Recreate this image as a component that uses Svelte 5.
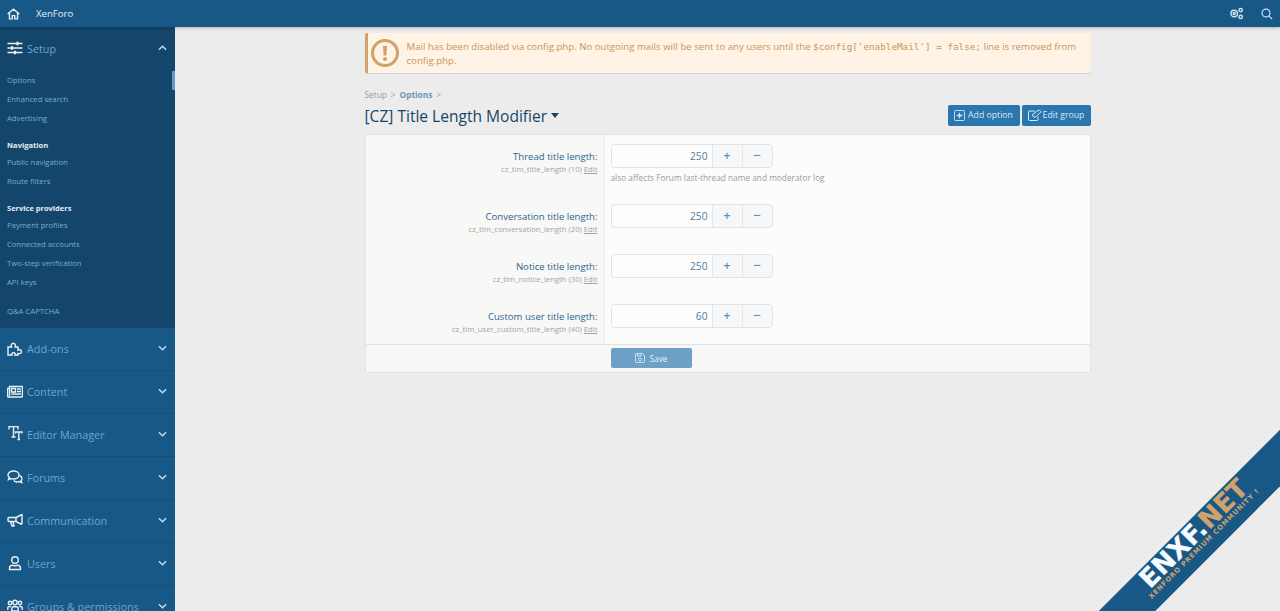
<script lang="ts">
    const setupGroups = [
        { items: ["Options", "Enhanced search", "Advertising"] },
        { title: "Navigation", items: ["Public navigation", "Route filters"] },
        { title: "Service providers", items: ["Payment profiles", "Connected accounts", "Two-step verification", "API keys"] },
        { items: ["Q&A CAPTCHA"] },
    ];

    const sections = [
        { label: "Add-ons", icon: "puzzle" },
        { label: "Content", icon: "news" },
        { label: "Editor Manager", icon: "text" },
        { label: "Forums", icon: "comments" },
        { label: "Communication", icon: "bullhorn" },
        { label: "Users", icon: "user" },
        { label: "Groups & permissions", icon: "users" },
    ];

    const options = [
        { label: "Thread title length:", id: "cz_tlm_title_length (10)", value: 250, hint: "also affects Forum last-thread name and moderator log" },
        { label: "Conversation title length:", id: "cz_tlm_conversation_length (20)", value: 250 },
        { label: "Notice title length:", id: "cz_tlm_notice_length (30)", value: 250 },
        { label: "Custom user title length:", id: "cz_tlm_user_custom_title_length (40)", value: 60 },
    ];
</script>

{#snippet navIcon(name)}
    <svg class="nav-icon" viewBox="0 0 16 16" fill="none" stroke="currentColor" stroke-width="1.400">
        {#if name === "puzzle"}
            <path d="M1 7h3.500c-.9-2 .2-3.800 1.800-3.800S9 5 8.200 7H11v3c1.600-.7 3.500 0 3.500 1.700S12.600 14 11 13.400V15H8c.5-1.500-.4-2.400-1.500-2.400S4.500 13.500 5 15H1z" />
        {:else if name === "news"}
            <path d="M2.500 3.500h13v9.500a1 1 0 0 1-1 1H1.500a1 1 0 0 1-1-1V5.500h2zM2.500 5.500V13" />
            <path d="M4.500 5.500h4v3.500h-4zM10 6h4M10 8.500h4M4.500 11h9.500" />
        {:else if name === "text"}
            <path d="M2 3.500V.5h9v3M6.500.5V11M4.500 11h4" />
            <path d="M8.500 7.500V6h6.500v1.500M11.800 6v7.500M10.500 13.500h2.600" />
        {:else if name === "comments"}
            <path d="M6.500 2C3.500 2 1 3.700 1 6c0 1 .5 1.900 1.300 2.600L1.500 10.500l2.500-.9c.8.300 1.600.4 2.500.4 3 0 5.500-1.700 5.500-4S9.500 2 6.500 2z" />
            <path d="M12.500 6.500c1.500.6 2.500 1.800 2.500 3 0 .9-.4 1.600-1 2.200l.7 1.800-2.500-.9c-2 .7-4.200.3-5.500-1" />
        {:else if name === "bullhorn"}
            <path d="M15 2v10M15 2.500 9 5.500H2a1 1 0 0 0-1 1v2a1 1 0 0 0 1 1h7l6 3" />
            <path d="M3.500 9.500 5 14h2L6 9.500M9 5.500v4" />
        {:else if name === "user"}
            <circle cx="8" cy="5" r="3.300" />
            <path d="M2.500 14.500v-1.200c0-1.700 1.400-3 3-3 .8 0 1.500.4 2.500.4s1.700-.4 2.500-.4c1.600 0 3 1.300 3 3v1.200z" />
        {:else}
            <circle cx="3" cy="5" r="1.700" />
            <circle cx="8" cy="4.500" r="2.200" />
            <circle cx="13" cy="5" r="1.700" />
            <path d="M.8 12V9.800c0-.8.700-1.300 1.400-1.300h1.600M15.200 12V9.800c0-.8-.7-1.300-1.400-1.300h-1.600M4.800 13v-2.500c0-1.100.8-1.800 1.800-1.800h2.800c1 0 1.800.7 1.800 1.800V13z" />
        {/if}
    </svg>
{/snippet}

{#snippet chevron(up)}
    <svg class="chevron" viewBox="0 0 10 6" fill="none" stroke="currentColor" stroke-width="1.600">
        <path d={up ? "M1 5l4-4 4 4" : "M1 1l4 4 4-4"} />
    </svg>
{/snippet}

<div class="page">
    <header class="topbar">
        <svg class="home" viewBox="0 0 16 14" fill="none" stroke="currentColor" stroke-width="1.700">
            <path d="M.8 7 8 1l7.200 6M3 5.500V13h3.500V9h3v4H13V5.500" />
        </svg>
        <span class="brand">XenForo</span>
        <span class="spacer"></span>
        <svg class="top-icon" viewBox="0 0 16 14" fill="none" stroke="currentColor" stroke-width="1.600">
            <circle cx="5.500" cy="7" r="3.500" />
            <circle cx="5.500" cy="7" r="1" />
            <circle cx="12.500" cy="3.300" r="1.800" />
            <circle cx="12.500" cy="10.700" r="1.800" />
        </svg>
        <svg class="top-icon search" viewBox="0 0 14 14" fill="none" stroke="currentColor" stroke-width="1.400">
            <circle cx="5.800" cy="5.800" r="4.600" />
            <path d="M9.200 9.200 13 13" />
        </svg>
    </header>

    <div class="body">
        <nav class="sidebar">
            <div class="section open">
                <div class="section-head">
                    <svg class="nav-icon" viewBox="0 0 16 16" fill="none" stroke="currentColor" stroke-width="1.400">
                        <path d="M.5 3.500h15M.5 8h15M.5 12.500h15" />
                        <path d="M10.500 1.800v3.400M5 6.300v3.400M8 10.800v3.400" stroke-width="2.200" />
                    </svg>
                    <span class="section-label">Setup</span>
                    {@render chevron(true)}
                </div>
                <div class="sublist">
                    {#each setupGroups as group, g}
                        <div class="group" class:last={g === 3}>
                            {#if group.title}
                                <div class="group-title">{group.title}</div>
                            {/if}
                            {#each group.items as item}
                                <a class="subitem" class:active={item === "Options"} href="#top">{item}</a>
                            {/each}
                        </div>
                    {/each}
                </div>
            </div>
            {#each sections as section}
                <div class="section">
                    <div class="section-head">
                        {@render navIcon(section.icon)}
                        <span class="section-label">{section.label}</span>
                        {@render chevron(false)}
                    </div>
                </div>
            {/each}
        </nav>

        <main class="main">
            <div class="content">
                <div class="notice">
                    <svg class="notice-icon" viewBox="0 0 28 28">
                        <circle cx="14" cy="14" r="12.500" fill="none" stroke="currentColor" stroke-width="3" />
                        <path d="M12 7h4l-.6 9.500h-2.800z" fill="currentColor" />
                        <circle cx="14" cy="20" r="2" fill="currentColor" />
                    </svg>
                    <p>Mail has been disabled via config.php. No outgoing mails will be sent to any users until the <code>$config['enableMail'] = false;</code> line is removed from config.php.</p>
                </div>

                <div class="crumbs">
                    <span>Setup</span><span class="sep">&gt;</span><b>Options</b><span class="sep">&gt;</span>
                </div>

                <div class="title-row">
                    <h1>[CZ] Title Length Modifier</h1>
                    <span class="caret"></span>
                    <span class="spacer"></span>
                    <button class="action add">
                        <svg viewBox="0 0 12 12" fill="none" stroke="currentColor" stroke-width="1">
                            <rect x=".5" y=".5" width="11" height="11" rx="1" />
                            <path d="M6 3v6M3 6h6" stroke-width="1.400" />
                        </svg>
                        Add option
                    </button>
                    <button class="action edit">
                        <svg viewBox="0 0 14 12" fill="none" stroke="currentColor" stroke-width="1">
                            <path d="M10 7.500v3a1 1 0 0 1-1 1H1.500a1 1 0 0 1-1-1V3a1 1 0 0 1 1-1H7" />
                            <path d="M4.500 7 5 5 11 .8l2 2L7 8.500z" />
                        </svg>
                        Edit group
                    </button>
                </div>

                <section class="card">
                    {#each options as opt, i}
                        <div class="row" class:with-hint={opt.hint} class:last={i === options.length - 1}>
                            <div class="label-col">
                                <div class="opt-label">{opt.label}</div>
                                <div class="opt-id">{opt.id} <u>Edit</u></div>
                            </div>
                            <div class="input-col">
                                <div class="spinner">
                                    <span class="value">{opt.value}</span>
                                    <span class="step">+</span>
                                    <span class="step">−</span>
                                </div>
                                {#if opt.hint}
                                    <div class="hint">{opt.hint}</div>
                                {/if}
                            </div>
                        </div>
                    {/each}
                    <div class="footer">
                        <button class="save">
                            <svg viewBox="0 0 12 12" fill="none" stroke="currentColor" stroke-width="1">
                                <path d="M.5 1.500a1 1 0 0 1 1-1h7.500l2.500 2.500v7.500a1 1 0 0 1-1 1h-9a1 1 0 0 1-1-1z" />
                                <path d="M3 .5v3h4.500v-3" />
                                <circle cx="6" cy="7.800" r="1.700" />
                            </svg>
                            Save
                        </button>
                    </div>
                </section>
            </div>
        </main>
    </div>

    <div class="ribbon">
        <div class="band">
            <div class="wordmark"><span class="enxf">ENXF.</span><span class="net">NET</span></div>
            <div class="tagline">XENFORO PREMIUM COMMUNITY !</div>
        </div>
    </div>
</div>

<style>
    :global(body) {
        margin: 0;
        background: #ececec;
    }

    .page {
        position: relative;
        height: 611px;
        overflow: hidden;
        font-family: "Open Sans", "Noto Sans", sans-serif;
        font-size: 11px;
        color: #4a4a4a;
    }

    .spacer {
        flex: 1;
    }

    .topbar {
        height: 27px;
        display: flex;
        align-items: center;
        background: #185886;
        color: #e6eef5;
        padding: 0 7px 0 7px;
        box-shadow: 0 1px 3px rgba(0, 0, 0, 0.25);
        position: relative;
        z-index: 2;
    }

    .home {
        width: 13px;
        height: 12px;
    }

    .brand {
        margin-left: 16px;
        font-size: 9.600px;
    }

    .top-icon {
        width: 15px;
        height: 13px;
        color: #cfe0ee;
    }

    .search {
        width: 12px;
        height: 12px;
        margin-left: 17px;
    }

    .body {
        display: flex;
        height: 584px;
    }

    .sidebar {
        width: 175px;
        flex: none;
        background: #185886;
        overflow: hidden;
    }

    .section {
        height: 43px;
        border-bottom: 1px dotted #14466b;
        box-sizing: border-box;
    }

    .section.open {
        height: 301px;
        background: #14466b;
        border-bottom: 0;
    }

    .section-head {
        height: 40px;
        display: flex;
        align-items: center;
        padding: 0 7px 0 7px;
        color: #e8f0f6;
    }

    .open .section-head {
        height: 42px;
        margin-bottom: 2px;
    }

    .nav-icon {
        width: 16px;
        height: 16px;
        flex: none;
    }

    .section-label {
        margin-left: 4px;
        flex: 1;
        font-size: 10.800px;
        color: #6ea5cf;
    }

    .chevron {
        width: 9px;
        height: 6px;
        margin-right: 1px;
        color: #c9dceb;
    }

    .sublist {
        display: flex;
        flex-direction: column;
    }

    .group {
        display: flex;
        flex-direction: column;
        margin-bottom: 8px;
    }

    .group.last {
        margin-top: 2px;
    }

    .group-title {
        padding: 2px 7px 0;
        height: 15px;
        line-height: 15px;
        font-size: 7.500px;
        font-weight: 700;
        color: #e4edf4;
    }

    .subitem {
        height: 19px;
        line-height: 19px;
        padding: 0 7px;
        font-size: 7.700px;
        color: #76acd6;
        text-decoration: none;
        box-sizing: border-box;
    }

    .subitem.active {
        border-right: 3px solid #5f9ccb;
    }

    .main {
        flex: 1;
        padding-top: 6px;
        min-width: 0;
    }

    .content {
        width: 726px;
        margin: 0 auto;
    }

    .notice {
        box-sizing: border-box;
        height: 40px;
        display: flex;
        align-items: center;
        gap: 8px;
        background: #fef3e5;
        border-left: 3px solid #cfa36b;
        border-radius: 2px;
        box-shadow: 0 1px 1px rgba(0, 0, 0, 0.12);
        padding: 0 12px 0 3px;
        color: #c9955a;
    }

    .notice-icon {
        width: 28px;
        height: 28px;
        flex: none;
        color: #cfa36b;
    }

    .notice p {
        margin: 0;
        padding-top: 1px;
        font-size: 9.650px;
        line-height: 14px;
    }

    code {
        font-family: "DejaVu Sans Mono", "Liberation Mono", monospace;
        font-size: 9.300px;
    }

    .crumbs {
        margin-top: 15px;
        height: 14px;
        line-height: 14px;
        font-size: 8.300px;
        color: #9a9a9a;
    }

    .crumbs b {
        color: #6a95b8;
    }

    .sep {
        margin: 0 4px;
    }

    .title-row {
        height: 26px;
        display: flex;
        align-items: center;
    }

    h1 {
        margin: 1px 0 0;
        font-size: 15.550px;
        font-weight: 400;
        color: #14466b;
    }

    .caret {
        margin-left: 4px;
        border: 4.500px solid transparent;
        border-top: 5px solid #14466b;
        border-bottom: 0;
    }

    .action {
        height: 21px;
        box-sizing: border-box;
        border: 0;
        border-radius: 2px;
        background: #2a77b0;
        color: #dbe8f2;
        font: inherit;
        font-size: 8.700px;
        display: flex;
        align-items: center;
        gap: 3px;
        padding: 0;
        justify-content: center;
    }

    .action.add {
        width: 72px;
        margin-right: 2px;
    }

    .action.edit {
        width: 69px;
        gap: 1px;
    }

    .action svg {
        width: 11px;
        height: 11px;
    }

    .action.edit svg {
        width: 14px;
        height: 12px;
    }

    .card {
        margin-top: 6px;
        height: 239px;
        box-sizing: border-box;
        background: #fcfcfd;
        border: 1px solid #e2e2e2;
        border-radius: 2px;
        overflow: hidden;
    }

    .row {
        display: flex;
        height: 50px;
        box-sizing: border-box;
    }

    .row.with-hint {
        height: 60px;
    }

    .row.last {
        height: 49px;
    }

    .label-col {
        width: 239px;
        flex: none;
        box-sizing: border-box;
        background: #f8f8f7;
        border-right: 1px solid #ebebeb;
        padding: 14px 6px 0 0;
        text-align: right;
    }

    .opt-label {
        font-size: 9.600px;
        line-height: 15px;
        color: #2a6590;
    }

    .opt-id {
        font-size: 7.700px;
        line-height: 11px;
        color: #a3a3a3;
    }

    .input-col {
        padding: 9px 0 0 6px;
    }

    .spinner {
        width: 162px;
        height: 24px;
        box-sizing: border-box;
        display: flex;
        background: #fdfdfd;
        border: 1px solid #e3e3e3;
        border-radius: 3px;
    }

    .value {
        flex: 1;
        text-align: right;
        line-height: 22px;
        padding-right: 4px;
        font-size: 10.200px;
        color: #4f7ea3;
    }

    .step {
        width: 30px;
        flex: none;
        box-sizing: border-box;
        text-align: center;
        line-height: 21px;
        font-size: 13px;
        font-weight: 600;
        background: #f6f7f8;
        border-left: 1px solid #e6e6e6;
        color: #5f94bd;
    }

    .hint {
        margin-top: 4px;
        font-size: 8.300px;
        line-height: 12px;
        color: #9b9b9b;
    }

    .footer {
        height: 28px;
        box-sizing: border-box;
        background: #f7f7f7;
        border-top: 1px solid #e2e2e2;
        padding: 3px 0 0 245px;
    }

    .save {
        width: 81px;
        height: 20px;
        border: 0;
        border-radius: 2px;
        background: #6ca0c6;
        color: #e8f0f6;
        font: inherit;
        font-size: 8.300px;
        display: flex;
        align-items: center;
        justify-content: center;
        gap: 5px;
        padding: 0;
    }

    .save svg {
        width: 10px;
        height: 10px;
    }

    .ribbon {
        position: absolute;
        right: 0;
        bottom: 0;
        width: 181px;
        height: 181px;
        overflow: hidden;
    }

    .band {
        position: absolute;
        left: -45px;
        top: 84px;
        width: 300px;
        height: 40px;
        padding-right: 14px;
        box-sizing: border-box;
        background: #185886;
        transform: rotate(-45deg);
        box-shadow: 0 0 2px rgba(255, 255, 255, 0.8);
        text-align: center;
        font-family: "DejaVu Sans", sans-serif;
        font-weight: 700;
    }

    .wordmark {
        font-size: 26px;
        line-height: 24px;
        white-space: nowrap;
    }

    .enxf {
        color: #f7fbff;
        -webkit-text-stroke: 0.3px #f7fbff;
    }

    .net {
        color: #cfa36b;
        -webkit-text-stroke: 0.3px #cfa36b;
    }

    .tagline {
        margin-top: -1.500px;
        font-size: 6.800px;
        line-height: 9px;
        letter-spacing: 0.8px;
        color: #cfa36b;
        white-space: nowrap;
    }
</style>
